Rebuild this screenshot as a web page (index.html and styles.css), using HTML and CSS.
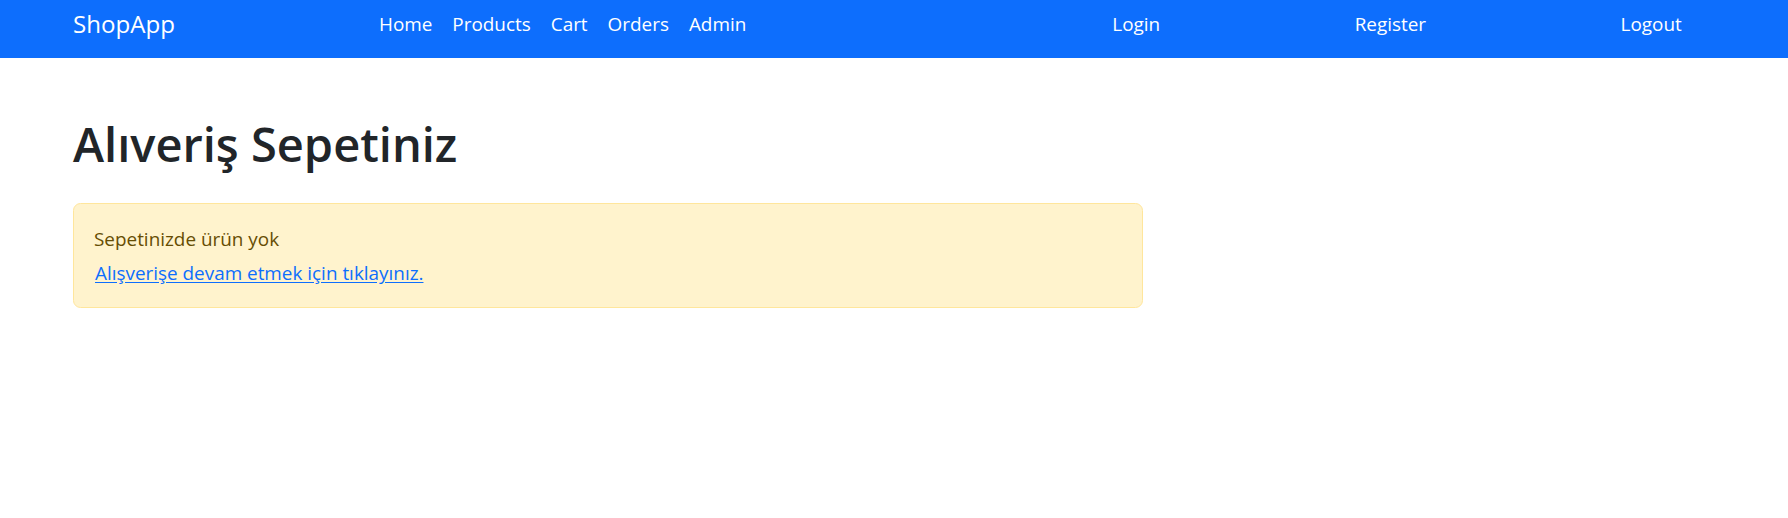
FILE: index.html
```html
<!DOCTYPE html>
<html lang="tr">
<head>
<meta charset="utf-8">
<title>ShopApp</title>
<link rel="stylesheet" href="styles.css">
</head>
<body>
<nav class="navbar">
  <a class="brand" href="#">ShopApp</a>
  <ul class="nav nav-main">
    <li><a class="nav-link" href="#">Home</a></li>
    <li><a class="nav-link" href="#">Products</a></li>
    <li><a class="nav-link" href="#">Cart</a></li>
    <li><a class="nav-link" href="#">Orders</a></li>
    <li><a class="nav-link" href="#">Admin</a></li>
  </ul>
  <ul class="nav nav-account">
    <li><a class="nav-link" href="#">Login</a></li>
    <li><a class="nav-link" href="#">Register</a></li>
    <li><a class="nav-link" href="#">Logout</a></li>
  </ul>
</nav>
<main class="container">
  <h1 class="title">Alıveriş Sepetiniz</h1>
  <div class="alert">
    <div class="alert-text">Sepetinizde ürün yok</div>
    <a class="alert-link" href="#">Alışverişe devam etmek için tıklayınız.</a>
  </div>
</main>
</body>
</html>
```
FILE: styles.css
```css
* { box-sizing: border-box; }

body {
  margin: 0;
  font-family: "Open Sans", "Noto Sans", sans-serif;
  font-size: 18.9px;
  line-height: 30px;
  color: #212529;
  background: #fff;
}

a { text-decoration: none; }

.navbar {
  display: flex;
  align-items: flex-start;
  height: 58px;
  padding-left: 73px;
  padding-right: 9px;
  background: #0d6efd;
}

.brand {
  color: #fff;
  font-size: 24.1px;
  line-height: 36px;
  padding-top: 6px;
}

.nav {
  display: flex;
  list-style: none;
  margin: 0;
  padding: 0;
}

.nav-main {
  margin-left: 194px;
}

.nav-account {
  margin-left: auto;
  width: 764px;
}

.nav-account li {
  flex: 1 1 auto;
  text-align: center;
}

.nav-link {
  display: block;
  color: #fff;
  padding: 9px 10px 0;
  line-height: 30px;
}

.container {
  padding: 0 73px;
}

.title {
  margin: 0;
  padding-top: 58px;
  font-size: 47px;
  line-height: 1.2;
  font-weight: 600;
  color: #212529;
}

.alert {
  margin-top: 31px;
  width: 1070px;
  padding: 20px 20px 19px;
  border: 1px solid #ffe69c;
  border-radius: 7.5px;
  background: #fff3cd;
  color: #664d03;
}

.alert-text {
  margin-bottom: 4px;
}

.alert-link {
  display: inline-block;
  margin-left: 1px;
  color: #0d6efd;
  text-decoration: underline;
  text-underline-offset: 2px;
}
```
